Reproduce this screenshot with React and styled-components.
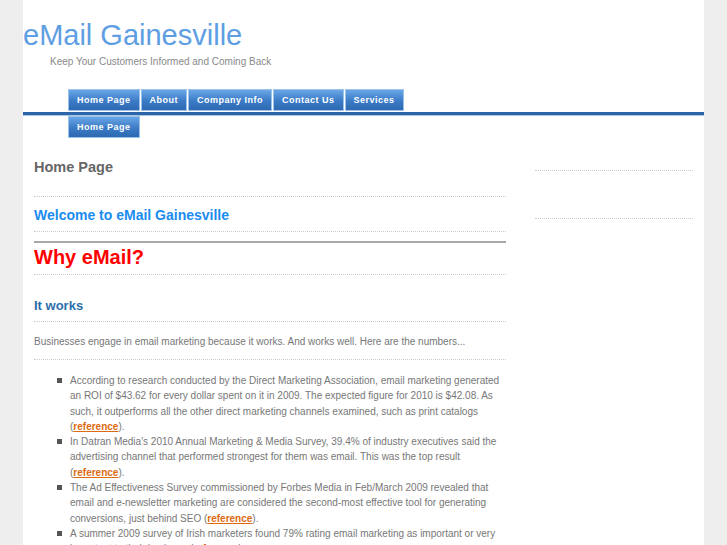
import styled, { createGlobalStyle } from 'styled-components'

const GlobalStyle = createGlobalStyle`
  body {
    margin: 0;
    background: #eeeeee;
    font-family: "Liberation Sans", Arial, sans-serif;
    overflow: hidden;
  }
`

const navItems = ['Home Page', 'About', 'Company Info', 'Contact Us', 'Services']

const bullets = [
  {
    text: 'According to research conducted by the Direct Marketing Association, email marketing generated an ROI of $43.62 for every dollar spent on it in 2009. The expected figure for 2010 is $42.08. As such, it outperforms all the other direct marketing channels examined, such as print catalogs (',
    end: ').'
  },
  {
    text: "In Datran Media's 2010 Annual Marketing & Media Survey, 39.4% of industry executives said the advertising channel that performed strongest for them was email. This was the top result (",
    end: ').'
  },
  {
    text: 'The Ad Effectiveness Survey commissioned by Forbes Media in Feb/March 2009 revealed that email and e-newsletter marketing are considered the second-most effective tool for generating conversions, just behind SEO (',
    end: ').'
  },
  {
    text: 'A summer 2009 survey of Irish marketers found 79% rating email marketing as important or very important to their business (',
    end: ').'
  }
]

const App = () => {
  return (
    <>
      <GlobalStyle />
      <Page>
        <Header>
          <SiteTitle>eMail Gainesville</SiteTitle>
          <Tagline>Keep Your Customers Informed and Coming Back</Tagline>
        </Header>
        <NavRow>
          {navItems.map(item => (
            <NavButton key={item}>{item}</NavButton>
          ))}
        </NavRow>
        <NavBar />
        <SubNavRow>
          <NavButton>Home Page</NavButton>
        </SubNavRow>
        <Columns>
          <Main>
            <PageTitle>Home Page</PageTitle>
            <Welcome>Welcome to eMail Gainesville</Welcome>
            <Rule />
            <Why>Why eMail?</Why>
            <SubHead>It works</SubHead>
            <Intro>
              Businesses engage in email marketing because it works. And works
              well. Here are the numbers...
            </Intro>
            <List>
              {bullets.map((b, i) => (
                <Item key={i}>
                  {b.text}
                  <RefLink>reference</RefLink>
                  {b.end}
                </Item>
              ))}
            </List>
          </Main>
          <Sidebar>
            <Widget $height={31} />
            <Widget $height={47} />
          </Sidebar>
        </Columns>
      </Page>
    </>
  )
}

//Style-------------------------------------------------------------------------

const Page = styled.div`
  width: 681px;
  margin: 0 auto;
  min-height: 545px;
  background: #ffffff;
`

const Header = styled.div`
  padding-top: 18px;
  height: 71px;
  box-sizing: border-box;
`

const SiteTitle = styled.h1`
  margin: 0;
  font-size: 29px;
  font-weight: normal;
  line-height: 34px;
  color: #5e9ee2;
`

const Tagline = styled.div`
  margin: 4px 0 0 27px;
  font-size: 10px;
  color: #8a8a8a;
`

const NavRow = styled.div`
  display: flex;
  gap: 1px;
  padding-left: 45px;
  height: 23px;
  margin-top: 18px;
`

const NavButton = styled.div`
  height: 22px;
  box-sizing: border-box;
  padding: 0 8px;
  display: flex;
  align-items: center;
  border: 1px solid #9cc2ea;
  background: linear-gradient(#6aa6e6, #3b7bc6 55%, #2d69b2);
  color: #ffffff;
  font-size: 9px;
  font-weight: bold;
  letter-spacing: 0.5px;
  white-space: nowrap;
`

const NavBar = styled.div`
  height: 3px;
  background: #2c64a9;
  border-bottom: 1px solid #a9c6e6;
`

const SubNavRow = styled.div`
  display: flex;
  padding-left: 45px;
  height: 23px;
`

const Columns = styled.div`
  display: flex;
  padding: 0 11px;
  gap: 29px;
`

const Main = styled.div`
  width: 472px;
`

const PageTitle = styled.h2`
  margin: 0;
  padding: 20px 0 21px;
  font-size: 14.5px;
  color: #666666;
  border-bottom: 1px dotted #cccccc;
`

const Welcome = styled.h2`
  margin: 0;
  padding: 10px 0 8px;
  font-size: 14px;
  color: #1a8cf0;
  border-bottom: 1px dotted #cccccc;
`

const Rule = styled.div`
  margin-top: 9px;
  height: 2px;
  background: #a8a8a8;
`

const Why = styled.h2`
  margin: 0;
  padding: 3px 0 5px;
  font-size: 20px;
  color: #ff0000;
  border-bottom: 1px dotted #cccccc;
`

const SubHead = styled.h3`
  margin: 0;
  padding: 23px 0 8px;
  font-size: 13px;
  color: #2c6eaa;
  border-bottom: 1px dotted #cccccc;
`

const Intro = styled.p`
  margin: 0;
  padding: 14px 0 12px;
  font-size: 10px;
  color: #777777;
  border-bottom: 1px dotted #cccccc;
`

const List = styled.ul`
  margin: 0;
  padding: 13px 0 0 36px;
  list-style: none;
`

const Item = styled.li`
  position: relative;
  font-size: 10px;
  line-height: 15.3px;
  color: #777777;
  &::before {
    content: '';
    position: absolute;
    left: -13px;
    top: 5px;
    width: 5px;
    height: 5px;
    background: #555555;
  }
`

const RefLink = styled.a`
  color: #dd6a10;
  font-weight: bold;
  text-decoration: underline;
`

const Sidebar = styled.div`
  width: 158px;
`

const Widget = styled.div`
  height: ${props => props.$height}px;
  border-bottom: 1px dotted #cccccc;
`

export default App
